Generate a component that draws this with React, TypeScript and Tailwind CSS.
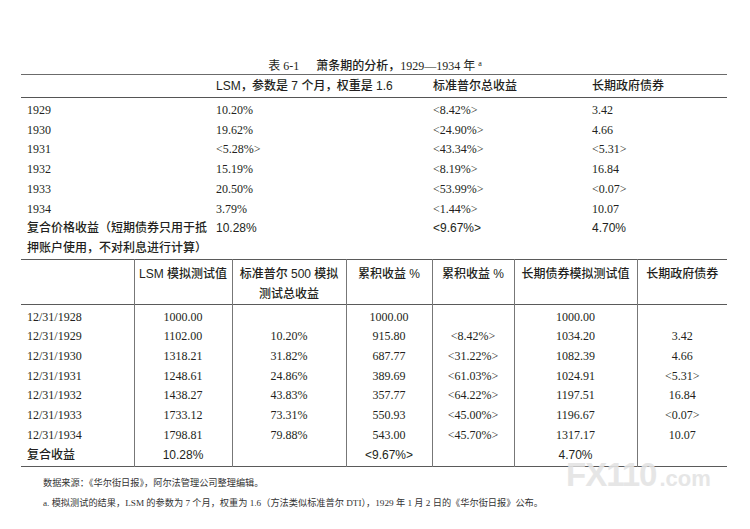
const serif = "font-['Liberation_Serif','Noto_Sans_CJK_SC',serif]";
const sans = "font-['Liberation_Sans','Noto_Sans_CJK_SC',sans-serif]";

const rows1 = [
  ['1929', '10.20%', '<8.42%>', '3.42'],
  ['1930', '19.62%', '<24.90%>', '4.66'],
  ['1931', '<5.28%>', '<43.34%>', '<5.31>'],
  ['1932', '15.19%', '<8.19%>', '16.84'],
  ['1933', '20.50%', '<53.99%>', '<0.07>'],
  ['1934', '3.79%', '<1.44%>', '10.07'],
];

const rows2 = [
  ['12/31/1928', '1000.00', '', '1000.00', '', '1000.00', ''],
  ['12/31/1929', '1102.00', '10.20%', '915.80', '<8.42%>', '1034.20', '3.42'],
  ['12/31/1930', '1318.21', '31.82%', '687.77', '<31.22%>', '1082.39', '4.66'],
  ['12/31/1931', '1248.61', '24.86%', '389.69', '<61.03%>', '1024.91', '<5.31>'],
  ['12/31/1932', '1438.27', '43.83%', '357.77', '<64.22%>', '1197.51', '16.84'],
  ['12/31/1933', '1733.12', '73.31%', '550.93', '<45.00%>', '1196.67', '<0.07>'],
  ['12/31/1934', '1798.81', '79.88%', '543.00', '<45.70%>', '1317.17', '10.07'],
];

const headers2 = [
  '',
  'LSM 模拟测试值',
  '标准普尔 500 模拟测试总收益',
  '累积收益 %',
  '累积收益 %',
  '长期债券模拟测试值',
  '长期政府债券',
];

export default function App() {
  return (
    <div className="relative w-[750px] h-[529px] overflow-hidden bg-white text-[#231f20]">
      <div className="pt-[54px] px-[21px]">
        {/* title */}
        <div className={`h-[20px] leading-[20px] text-[12px] text-center ${serif}`}>
          <span>表 6-1</span>
          <span className="ml-[17px] font-medium">萧条期的分析，</span>
          <span>1929—1934 年</span>
          <span className="ml-[3px] text-[8px] align-[4px]">a</span>
        </div>

        {/* table 1 */}
        <div className="w-[706px] border-t border-[#6b6b6b] text-[12px]">
          <div className={`grid grid-cols-[189px_217px_159px_141px] h-[23px] items-center border-b border-[#555] font-medium ${sans}`}>
            <div />
            <div className="pl-[6px] whitespace-nowrap">
              LSM<span className="tracking-[-4px]">，</span> 参数是 7 个月<span className="tracking-[-4px]">，</span> 权重是 1.6
            </div>
            <div className="pl-[6px]">标准普尔总收益</div>
            <div className="pl-[6px]">长期政府债券</div>
          </div>
          <div className="pt-[3px]">
            {rows1.map((r) => (
              <div key={r[0]} className={`grid grid-cols-[189px_217px_159px_141px] leading-[19.7px] ${serif}`}>
                {r.map((c, i) => (
                  <div key={i} className="pl-[6px]">{c}</div>
                ))}
              </div>
            ))}
            <div className={`grid grid-cols-[189px_217px_159px_141px] leading-[19.7px] font-medium ${sans}`}>
              <div className="pl-[6px] whitespace-nowrap">
                复合价格收益（短期债券只用于抵
                <br />
                押账户使用，不对利息进行计算）
              </div>
              <div className="pl-[6px]">10.28%</div>
              <div className="pl-[6px]">&lt;9.67%&gt;</div>
              <div className="pl-[6px]">4.70%</div>
            </div>
          </div>
        </div>

        {/* table 2 */}
        <table className="w-[706px] table-fixed border-collapse text-[12px] border-t border-b border-[#5a5a5a]">
          <colgroup>
            <col className="w-[113px]" />
            <col className="w-[98px]" />
            <col className="w-[114px]" />
            <col className="w-[86px]" />
            <col className="w-[82px]" />
            <col className="w-[123px]" />
            <col className="w-[90px]" />
          </colgroup>
          <thead>
            <tr className="border-b border-[#5a5a5a]">
              {headers2.map((h, i) => (
                <th
                  key={i}
                  className={`h-[43px] pt-[4px] px-[4px] align-top text-center font-medium leading-[20px] ${sans} ${i > 0 ? 'border-l border-[#777]' : ''}`}
                >
                  {h}
                </th>
              ))}
            </tr>
          </thead>
          <tbody>
            {rows2.map((r, ri) => (
              <tr key={r[0]}>
                {r.map((c, i) => (
                  <td
                    key={i}
                    className={`p-0 leading-[19.7px] ${serif} ${ri === 0 ? 'pt-[3px]' : ''} ${i === 0 ? 'pl-[6px] text-left' : 'text-center border-l border-[#777]'}`}
                  >
                    {c}
                  </td>
                ))}
              </tr>
            ))}
            <tr className={`font-medium ${sans}`}>
              <td className="p-0 pb-[1px] pl-[6px] leading-[19.7px]">复合收益</td>
              <td className="p-0 pb-[1px] leading-[19.7px] text-center border-l border-[#777]">10.28%</td>
              <td className="p-0 pb-[1px] border-l border-[#777]" />
              <td className="p-0 pb-[1px] leading-[19.7px] text-center border-l border-[#777]">&lt;9.67%&gt;</td>
              <td className="p-0 pb-[1px] border-l border-[#777]" />
              <td className="p-0 pb-[1px] leading-[19.7px] text-center border-l border-[#777]">4.70%</td>
              <td className="p-0 pb-[1px] border-l border-[#777]" />
            </tr>
          </tbody>
        </table>

        {/* notes */}
        <div className={`mt-[6px] pl-[22px] text-[9.2px] leading-[20px] text-[#333] ${serif}`}>
          <p>数据来源：《华尔街日报》，阿尔法管理公司整理编辑。</p>
          <p>a. 模拟测试的结果，LSM 的参数为 7 个月，权重为 1.6（方法类似标准普尔 DTI），1929 年 1 月 2 日的《华尔街日报》公布。</p>
        </div>
      </div>

      {/* watermark */}
      <div className={`absolute left-[566px] top-[467px] flex items-baseline leading-[16px] text-[#e4e4e4] opacity-90 ${sans}`}>
        <span className="text-[33px] font-bold tracking-[-1px]">FX110</span>
        <span className="ml-[3px] text-[22px] font-bold">.com</span>
      </div>
    </div>
  );
}
